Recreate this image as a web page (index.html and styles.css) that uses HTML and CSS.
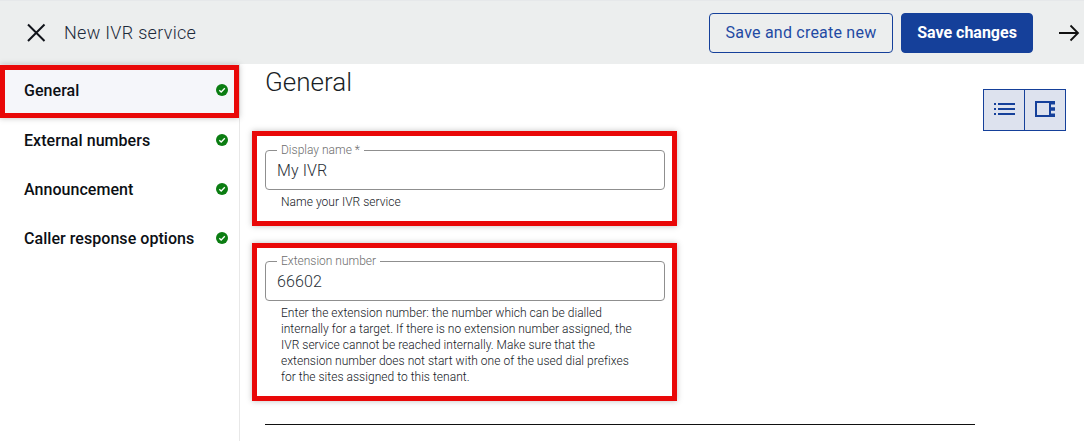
FILE: index.html
```html
<!DOCTYPE html>
<html lang="en">
<head>
<meta charset="utf-8">
<title>New IVR service</title>
<link rel="stylesheet" href="styles.css">
</head>
<body>
<header class="topbar">
  <svg class="close" width="20" height="20" viewBox="0 0 20 20"><path d="M2 1.500 18.500 18M18.500 1.500 2 18" fill="none" stroke="#10131a" stroke-width="2"/></svg>
  <h1 class="title">New IVR service</h1>
  <button class="btn btn-outline">Save and create new</button>
  <button class="btn btn-solid">Save changes</button>
  <svg class="arrow" width="22" height="18" viewBox="0 0 22 18"><path d="M1 9H20M12.500 1.500 20 9l-7.500 7.500" fill="none" stroke="#111" stroke-width="1.800"/></svg>
</header>
<div class="body">
  <nav class="side">
    <a class="item active"><span>General</span><svg class="ok" width="12" height="12" viewBox="0 0 12 12"><circle cx="6" cy="6" r="6" fill="#0b7d12"/><path d="M3.300 6.200 5.200 8 8.800 4.300" fill="none" stroke="#fff" stroke-width="1.300"/></svg></a>
    <a class="item"><span>External numbers</span><svg class="ok" width="12" height="12" viewBox="0 0 12 12"><circle cx="6" cy="6" r="6" fill="#0b7d12"/><path d="M3.300 6.200 5.200 8 8.800 4.300" fill="none" stroke="#fff" stroke-width="1.300"/></svg></a>
    <a class="item"><span>Announcement</span><svg class="ok" width="12" height="12" viewBox="0 0 12 12"><circle cx="6" cy="6" r="6" fill="#0b7d12"/><path d="M3.300 6.200 5.200 8 8.800 4.300" fill="none" stroke="#fff" stroke-width="1.300"/></svg></a>
    <a class="item"><span>Caller response options</span><svg class="ok" width="12" height="12" viewBox="0 0 12 12"><circle cx="6" cy="6" r="6" fill="#0b7d12"/><path d="M3.300 6.200 5.200 8 8.800 4.300" fill="none" stroke="#fff" stroke-width="1.300"/></svg></a>
    <div class="mark mark-side"></div>
  </nav>
  <main class="content">
    <div class="head">
      <h2 class="heading">General</h2>
      <div class="toggle">
        <button class="tg"><svg class="tg-icon" width="21" height="12" viewBox="0 0 21 12"><path d="M0 1H2M0 6H2M0 11H2M4 1H21M4 6H21M4 11H21" fill="none" stroke="#15409a" stroke-width="2"/></svg></button>
        <button class="tg"><svg class="tg-icon" width="20" height="16" viewBox="0 0 20 16"><path d="M1 1H15V15H1Z" fill="none" stroke="#15409a" stroke-width="2"/><path d="M15 0h5v3.500h-5zM16 6.250h4v3.500h-4zM15 12.500h5V16h-5z" fill="#15409a"/></svg></button>
      </div>
    </div>
    <section class="field first">
      <fieldset class="box"><legend class="lbl">Display name *</legend><span class="val">My IVR</span></fieldset>
      <p class="hint">Name your IVR service</p>
      <div class="mark mark-f1"></div>
    </section>
    <section class="field second">
      <fieldset class="box"><legend class="lbl">Extension number</legend><span class="val">66602</span></fieldset>
      <p class="hint">Enter the extension number: the number which can be dialled<br>internally for a target. If there is no extension number assigned, the<br>IVR service cannot be reached internally. Make sure that the<br>extension number does not start with one of the used dial prefixes<br>for the sites assigned to this tenant.</p>
      <div class="mark mark-f2"></div>
    </section>
    <hr class="rule">
  </main>
</div>
</body>
</html>
```
FILE: styles.css
```css
* { box-sizing: border-box; }
html, body { margin: 0; height: 100%; overflow: hidden; }
body { background: #fff; font-family: Roboto, "Liberation Sans", sans-serif; color: #111; }

.topbar { height: 64px; background: #eceeee; border-top: 1px solid #e6e8ea; display: flex; align-items: center; padding: 0 4px 0 26px; }
.close { flex: none; }
.title { margin: 0 0 0 18px; font-size: 18px; font-weight: 300; color: #1c2a3a; flex: 1; letter-spacing: .3px; }
.btn { height: 40px; border-radius: 4px; font-family: inherit; font-size: 16px; padding: 0; }
.btn-outline { width: 184px; background: transparent; border: 1px solid #15409a; color: #1f4aa3; font-weight: 400; letter-spacing: .22px; }
.btn-solid { width: 132px; margin-left: 8px; background: #15409a; border: 1px solid #15409a; color: #fff; font-weight: 700; }
.arrow { margin-left: 25px; flex: none; }

.body { display: flex; height: 377px; }
.side { width: 240px; flex: none; border-right: 1px solid #e8e8e8; position: relative; }
.item { height: 49px; display: flex; align-items: center; justify-content: space-between; padding: 0 11px 0 24px; font-size: 16px; font-weight: 500; color: #0c0f14; letter-spacing: .05px; }
.item.active { height: 52px; background: #f5f6fa; }
.ok { flex: none; margin-top: -1px; }

.content { flex: 1; padding: 0 109px 0 25px; position: relative; }
.head { height: 67px; position: relative; }
.heading { margin: 0; padding-top: 2px; font-size: 26px; line-height: 32px; font-weight: 300; color: #1a1f26; }
.toggle { position: absolute; right: -91px; top: 25px; display: flex; }
.tg { width: 42px; height: 42px; background: #dde2ee; border: 1px solid #15409a; padding: 0; display: flex; align-items: center; justify-content: center; }
.tg + .tg { margin-left: -1px; }
.tg-icon { margin-bottom: 2px; }

.field { position: relative; width: 400px; }
.first { margin-top: 12px; }
.second { margin-top: 44px; }
.box { margin: 0; height: 47px; padding: 0 11px; border: 1px solid #8f8f8f; border-radius: 4px; }
.lbl { margin-left: 0; padding: 0 4px; font-size: 12px; line-height: 14px; font-weight: 300; color: #6d6d6d; }
.val { display: block; font-size: 16px; line-height: 24px; font-weight: 300; color: #2a3038; margin-top: 2px; letter-spacing: .1px; }
.hint { margin: 4px 0 0; padding-left: 16px; font-size: 12px; line-height: 16px; font-weight: 300; color: #14181e; letter-spacing: .03px; }

.rule { margin: 39px 0 0; width: 710px; border: 0; border-top: 1px solid #111; }

.mark { position: absolute; border: 5px solid #e90808; box-shadow: 0 0 6px rgba(0, 0, 0, .25); pointer-events: none; }
.mark-side { left: 0; top: 1px; width: 239px; height: 53px; }
.mark-f1 { left: -13px; top: -12px; width: 425px; height: 95px; }
.mark-f2 { left: -13px; top: -11px; width: 425px; height: 158px; }
```
